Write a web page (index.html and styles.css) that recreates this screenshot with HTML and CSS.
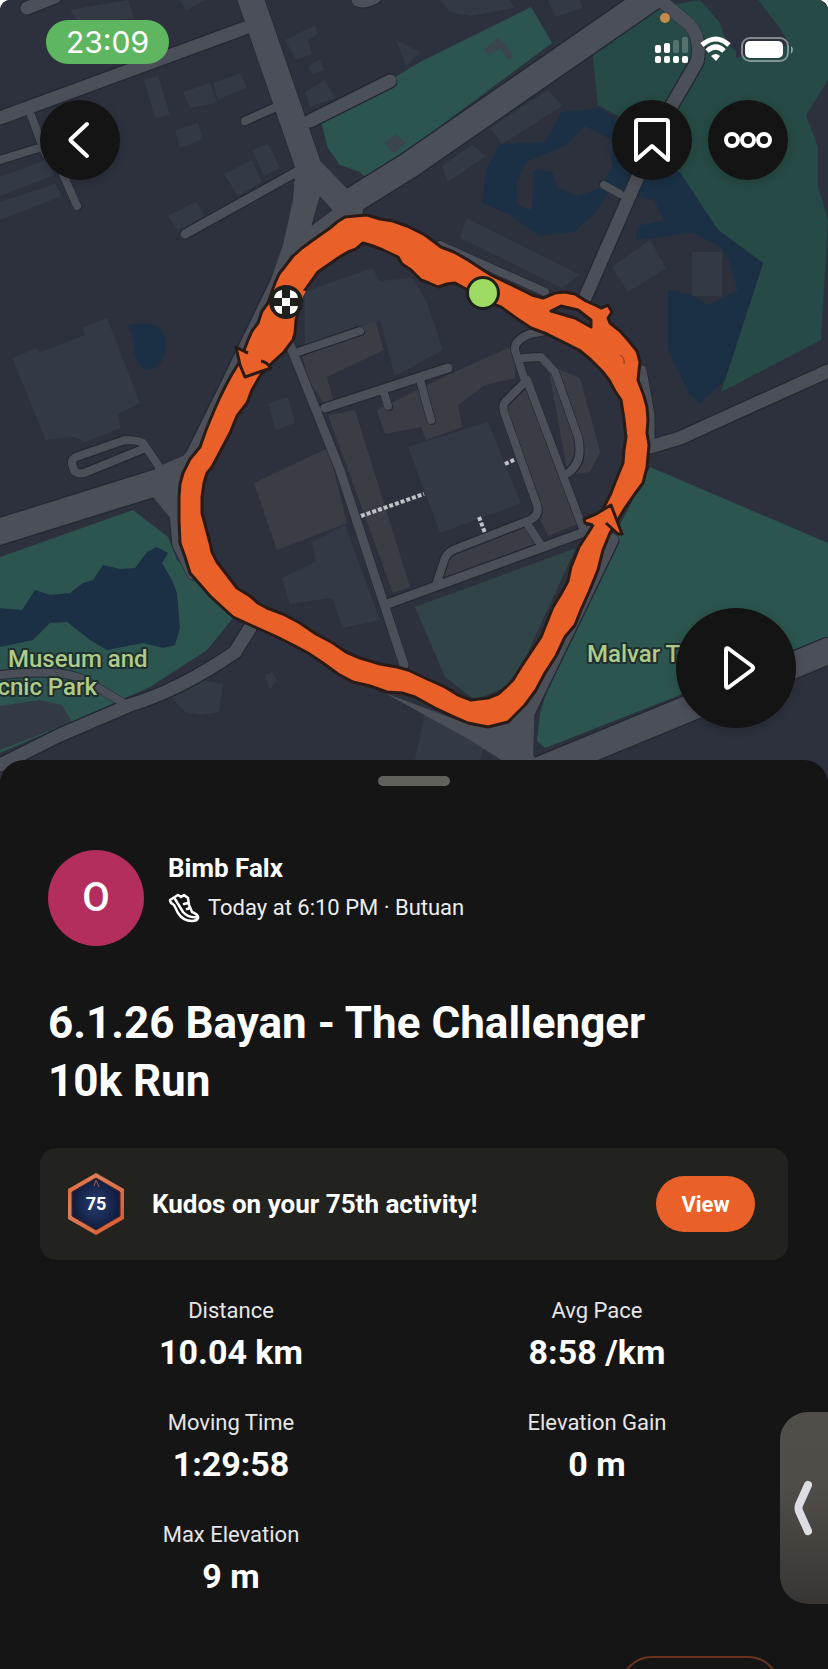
FILE: index.html
```html
<!DOCTYPE html>
<html lang="en">
<head>
<meta charset="utf-8">
<meta name="viewport" content="width=device-width, initial-scale=1">
<title>6.1.26 Bayan - The Challenger 10k Run</title>
<link rel="stylesheet" href="styles.css">
</head>
<body>
<div class="app">
  <section class="map" aria-label="Route map">
    <svg class="map-canvas" viewBox="0 0 828 780" preserveAspectRatio="xMidYMin slice" aria-hidden="true">
      <rect width="828" height="780" fill="#2c313d"/>
      <!-- parks -->
      <g fill="#2c5550">
        <path d="M321 122L420 62 531 7 552 43 408 150 368 180 360 172 340 165 328 148Z"/>
        <path d="M650 467L828 543V637L545 748 537 741 540 713 560 650 612 540Z"/>
        <path d="M0 557L133 510 168 537 177 560 233 618 207 650 150 687 72 722 0 753Z"/>
      </g>
      <g fill="#264a45">
        <path d="M655 8L592 50 598 105 680 150 675 173 718 230 763 263 721 392 821 340 828 220 818 187V147L806 115 828 80V0H758L781 30Q735 80 720 23L700 0Z"/>
      </g>
      <path d="M700 0Q738 18 736 58L790 45 781 30 758 0Z" fill="#2c313d"/>
      <path d="M415 607L576 548 521 667 506 687 475 700 445 677Z" fill="#314447"/>
      <!-- water -->
      <g fill="#1b3045">
        <path d="M0 608L22 610 35 590 50 595 70 593 83 583 93 580 103 565 120 569 135 568 147 552 157 547 168 553 162 563 172 580 177 593 180 628 175 645 163 648 143 643 107 650 90 640 67 622 50 623 33 640 0 647Z"/>
        <path d="M562 112L600 108 625 125 645 165 680 172 718 230 763 263 725 380 700 403 690 395 668 350 668 290 690 294 708 305 738 290 728 258 708 240 692 233 636 240 638 226 664 220 654 200 610 190 596 212 574 232 540 236 508 214 482 203 486 170 500 144 545 142Z"/>
        <path d="M128 325Q166 318 166 345 164 370 145 370 132 360 134 342Z"/>
      </g>
      <g fill="#2c313d">
        <path d="M565 146L585 126 612 140V168L600 188 578 196 558 188 552 172 534 170 532 210 518 206 516 184 526 162Z"/>
        <path d="M685 238Q720 236 728 262 732 290 705 302 684 288 675 268Z"/>
      </g>
      <!-- lots -->
      <g fill="#3a3e44">
        <path d="M254 483L328 448 347 523 277 550Z"/>
        <path d="M328 415L355 410 410 587 393 593Z"/>
        <path d="M302 355L375 320 384 350 310 385ZM308 380L326 375 334 402 325 405Z"/>
        <path d="M377 410L448 375 515 345 515 378 485 385 458 405 462 427 426 440 421 427 385 434Z"/>
        <path d="M505 410L530 383 580 523 548 536 537 513ZM548 365L580 378 600 452 590 472 568 475ZM450 552L530 525 541 543 437 580Z"/>
      </g>
      <!-- buildings -->
      <g fill="#333a45">
        <path d="M408 447L488 422 521 503 440 533Z"/>
        <path d="M305 292L372 268 380 281 412 278 426 300 443 350 395 376 380 320 305 345Z"/>
        <path d="M12 358L37 348 40 352 85 335 83 328 107 318 140 403 118 414 120 428 85 442 75 437 46 440Z"/>
        <path d="M282 578L316 562 312 542 345 525 380 620 343 628 332 598 290 604Z"/>
        <path d="M467 218L580 275 562 288 460 238ZM612 267L650 240 666 268 628 292ZM692 252H722V296H692Z"/>
        <path d="M183 92L210 83 217 103 190 108ZM213 83L240 73 247 87 218 100ZM144 80L158 76 170 115 155 118ZM175 130L198 123 203 139 180 148ZM224 174L252 160 262 182 238 196ZM252 150L268 144 280 168 264 176ZM168 216L196 202 204 216 178 232Z"/>
        <path d="M285 40L315 25 318 34 308 40 312 54 296 60ZM305 92L325 80 335 98 310 107ZM308 66L320 60 324 70 312 74ZM70 10L128 0 134 18 80 24ZM180 0H205L186 10Z"/>
        <path d="M490 128L548 90 562 106 502 144ZM442 166L472 145 486 156 448 182ZM548 0H580L582 8 556 17ZM440 0H510L514 8 470 16 450 12ZM396 40L420 52 406 66Z"/>
        <path d="M268 404L288 397 295 423 276 430ZM265 675L272 672 277 680 270 690ZM172 698L200 680 223 684 219 712 200 715 185 712Z"/>
        <path d="M0 177L45 160 55 175 0 196ZM0 202L55 184 62 196 0 220Z"/>
        <path d="M0 706L40 700 62 705 72 722 0 750ZM425 712L485 745 480 760H415Z"/>
      </g>
      <path d="M484 50L497 38 505 43 513 57 509 60 500 48 488 56ZM384 143L396 134 406 143 394 154Z" fill="#3a464c"/>
      <!-- roads: outline pass then surface pass -->
      <defs>
        <g id="roads" fill="none" stroke-linejoin="round">
          <g class="lane lane-8">
            <path d="M31 115L45 153M62 172L77 206M0 160L42 147M245 121L274 108M604 185L620 194M298 352L360 331M384 393L388 406M420 380L431 420M528 525L541 545"/>
            <path d="M160 468L143 443Q138 440 125 440L76 457Q70 460 73 467 74 475 84 473L143 449"/>
            <path d="M0 675Q60 668 85 680L125 704M545 292L440 245"/>
            <path d="M524 378L515 350Q514 340 530 334L545 331M524 358L541 357 555 372 578 437Q584 462 568 473M437 582L445 558Q448 551 458 548L530 520Q540 515 537 505L504 412Q502 404 507 400L527 380 582 526"/>
          </g>
          <g class="lane lane-9">
            <path d="M185 234L300 170M290 345L340 470 404 665M325 408L448 368M390 603L590 530M173 500Q175 525 177 545L192 575M642 370L650 415V447"/>
          </g>
          <g class="lane lane-12">
            <path d="M27 8L55 -3M310 121L390 81M358 0Q364 3 375 -3M650 447L680 438 828 371M660 0L690 25Q702 40 697 62L672 105 640 172 585 298M185 470L228 383 285 265M0 118L245 28M0 765L60 735 130 705Q180 690 235 652L250 628M520 730L612 540"/>
          </g>
          <g class="lane lane-26">
            <path d="M250 -3L309 168 350 210M300 245L350 202 408 166 655 -5M-5 533L165 480M515 780L828 651"/>
          </g>
        </g>
      </defs>
      <use href="#roads" class="road-edge"/>
      <use href="#roads" class="road-face"/>
      <path d="M296 165L323 168 340 200 298 238 275 290 260 310 283 245 293 200ZM155 468L183 456 197 440 185 500 172 520 168 515 153 497ZM385 693L470 725 535 700 533 755 545 772H520L470 740Z" fill="#4b4f58"/>
      <path d="M320 197L332 210 312 225Z" fill="#2c313d" stroke="#272c37"/>
      <g fill="none" stroke="#bfc2c5" stroke-width="4" stroke-dasharray="4 2"><path d="M361 516L424 494M505 464L516 459M479 517L485 533"/></g>
      <!-- recorded route -->
      <g fill="#ea6029" stroke="#2a1b17" stroke-width="3" stroke-linejoin="round">
        <path fill-rule="evenodd" d="M275 283L279 274 293 256 302 248 313 240 330 228 337 222 345 217 355 216 367 215 380 219 393 221 407 226 425 235 441 247 454 252 468 260 491 275 518 288 532 295 543 298 555 293 565 292 575 294 586 301 595 305 601 308 608 305 612 312 608 318 610 323 620 331 628 340 637 351 640 362 638 380 644 396 647 407 648 420 647 433 649 445 647 467 643 483 634 495 625 508 610 533 603 550 598 570 589 592 581 610 575 625 565 637 556 656 545 673 536 690 525 705 508 722 488 727 468 723 452 716 435 708 415 697 402 693 387 692 370 686 353 682 338 674 323 663 308 653 293 645 275 636 257 628 233 617 210 596 190 573 185 557 180 543 179 520 179 497 180 484 183 473 190 459 200 447 206 430 213 413 220 397 227 383 232 374 240 361 248 340 252 331 258 323 262 311 268 303ZM302 295L305 290 310 283 318 272 328 265 338 258 348 252 356 249 363 243 373 246 383 250 398 257 402 264 411 270 421 280 429 283 438 287 447 284 455 283 466 289 475 297 490 303 501 307 516 318 531 328 547 334 565 343 579 350 591 360 602 371 609 380 615 391 621 400 624 419 626 437 624 450 623 463 616 480 611 493 605 505 590 530 579 547 571 567 568 581 561 594 553 607 547 622 541 637 531 652 521 667 513 680 506 687 498 694 488 698 471 700 458 695 445 687 425 678 408 670 397 667 380 664 360 658 346 652 333 643 316 634 300 623 283 614 267 608 258 603 250 596 237 588 227 575 217 562 212 552 210 543 206 528 202 513 202 497 204 483 207 473 212 467 221 450 230 433 237 416 247 403 252 390 260 376 273 362 284 352 293 340 295 333 296 320 300 306ZM551 311L561 306 578 310 591 320V327L575 318Z"/>
        <path stroke="none" d="M272 304L279 280 300 290 306 291 298 306 280 336Z"/>
        <path d="M248 353Q241 350 236 347L240 365 245 377 271 368Q267 362 261 361"/>
        <path d="M593 525L585 523 584 519 596 514 611 505 622 534 618 534 606 523"/>
      </g>
      <path d="M620 355Q625 357 624 364" fill="none" stroke="#8b3d20"/>
      <circle cx="483" cy="293" r="17" fill="#1f1f1d"/><circle cx="483" cy="293" r="14" fill="#9ddb63"/>
      <circle cx="286" cy="302" r="17" fill="#1f1f1d"/>
      <path d="M282 298h8v8h-8zM282 290V298H274Q275 291 282 290ZM290 290V298H298Q297 291 290 290ZM282 314V306H274Q275 313 282 314ZM290 314V306H298Q297 313 290 314Z" fill="#fff"/>
      <g class="place">
        <text x="8" y="667">Museum and</text>
        <text x="97" y="695" text-anchor="end">cnic Park</text>
        <text x="587" y="662">Malvar T</text>
      </g>
    </svg>

    <div class="statusbar">
      <span class="clock">23:09</span>
      <span class="status-icons">
        <svg width="140" height="56" viewBox="0 0 140 56" aria-hidden="true">
          <circle cx="10" cy="10" r="5" fill="#c68a4b"/>
          <g fill="#fff"><rect y="37" width="6" height="8" rx="2"/><rect x="9" y="35" width="6" height="10" rx="2"/><rect y="48" width="6" height="7" rx="2"/><rect x="9" y="48" width="6" height="7" rx="2"/><rect x="18" y="48" width="6" height="7" rx="2"/><rect x="27" y="48" width="6" height="7" rx="2"/></g>
          <g fill="#fff" opacity=".22"><rect x="18" y="32" width="6" height="13" rx="2"/><rect x="27" y="29" width="6" height="16" rx="2"/></g>
          <path d="M47 37Q61 25 74 37M52 43Q61 35 69 43" fill="none" stroke="#fff" stroke-width="5"/>
          <path d="M56 48Q61 44 65 48L61 53Z" fill="#fff"/>
          <rect x="87" y="30" width="46" height="23" rx="8" fill="none" stroke="#fff" stroke-opacity=".42" stroke-width="2"/>
          <rect x="90" y="33" width="38" height="17" rx="5" fill="#fff"/>
          <path d="M136 38Q140 41 136 46Z" fill="#fff" fill-opacity=".5"/>
        </svg>
      </span>
    </div>

    <nav class="map-nav">
      <button class="round" aria-label="Back"><svg viewBox="0 0 80 80"><path d="M47 24L31 39Q30 40 31 41L47 56"/></svg></button>
      <button class="round save" aria-label="Save route"><svg viewBox="0 0 80 80"><path d="M24 22Q24 20 26 20H54Q56 20 56 22V60L40 46 24 60Z"/></svg></button>
      <button class="round" aria-label="More"><svg viewBox="0 0 80 80"><circle cx="24" cy="40" r="6"/><circle cx="40" cy="40" r="6"/><circle cx="56" cy="40" r="6"/></svg></button>
    </nav>
    <button class="round play" aria-label="Play route"><svg viewBox="0 0 120 120"><path d="M50 42Q50 39 53 41L76 58Q78 60 76 62L53 79Q50 81 50 78Z"/></svg></button>
  </section>

  <main class="sheet">
    <div class="handle"></div>
    <header class="athlete">
      <div class="avatar">O</div>
      <div class="athlete-text">
        <div class="name">Bimb Falx</div>
        <div class="meta">
          <svg width="32" height="32" viewBox="0 0 32 32" aria-hidden="true"><g fill="none" stroke="#fff" stroke-width="2.5" stroke-linejoin="round" stroke-linecap="round"><path d="M2 8L10 3 13 5 16 3 20 6 21 13 24 20Q31 23 30 26 29 29 24 29 15 29 10 21L6 13Q2 11 2 8ZM7 7L15 20Q20 26 29 25"/><path d="M16 12L20 11M19 17L22 16"/></g></svg>
          <span>Today at 6:10 PM · Butuan</span>
        </div>
      </div>
    </header>
    <h1 class="title">6.1.26 Bayan - The Challenger 10k Run</h1>
    <section class="kudos">
      <svg class="badge" width="58" height="64" viewBox="0 0 58 64" role="img" aria-label="75 activities">
        <defs><linearGradient id="rim" x1="0" y1="0" x2="1" y2="1"><stop offset="0" stop-color="#e85a28"/><stop offset=".3" stop-color="#d9805d"/><stop offset="1" stop-color="#d9572b"/></linearGradient>
        <radialGradient id="core"><stop offset="0" stop-color="#263d72"/><stop offset="1" stop-color="#111c3d"/></radialGradient></defs>
        <path d="M29 1L57 17V47L29 63 1 47V17Z" fill="url(#rim)"/>
        <path d="M29 6L53 20V44L29 58 5 44V20Z" fill="url(#core)" stroke="#4a2025"/>
        <path d="M27 14L29 8 32 15" fill="none" stroke="#a35a52"/>
        <text class="badge-num" x="29" y="38" text-anchor="middle">75</text>
      </svg>
      <p class="kudos-text">Kudos on your 75th activity!</p>
      <button class="view">View</button>
    </section>
    <dl class="stats">
      <div><dt>Distance</dt><dd>10.04 km</dd></div>
      <div><dt>Avg Pace</dt><dd>8:58 /km</dd></div>
      <div><dt>Moving Time</dt><dd>1:29:58</dd></div>
      <div><dt>Elevation Gain</dt><dd>0 m</dd></div>
      <div><dt>Max Elevation</dt><dd>9 m</dd></div>
    </dl>
    <button class="outlined" aria-label="More details"></button>
  </main>
  <button class="edge-tab" aria-label="Open side panel"><svg width="20" height="56" viewBox="0 0 20 56"><path d="M16 5L7 25Q6 28 7 31L16 51" fill="none" stroke="#dedee2" stroke-width="8" stroke-linecap="round" stroke-linejoin="round"/></svg></button>
</div>
</body>
</html>
```
FILE: styles.css
```css
* { box-sizing: border-box; }
body { margin: 0; background: #fff; font-family: Roboto, "Liberation Sans", Arial, sans-serif; color: #fff; }
button { border: 0; padding: 0; font: inherit; color: inherit; cursor: pointer; }
.app { position: relative; height: 100vh; overflow: hidden; border-radius: 10px 10px 0 0; background: #151515; }

.map { position: relative; aspect-ratio: 828 / 780; }
.map-canvas { position: absolute; inset: 0; width: 100%; height: 100%; }
.lane { stroke-linecap: round; }
.road-edge { stroke: #232833; }
.road-face { stroke: #4b4f58; }
.lane-8 { stroke-width: 8px; }
.lane-9 { stroke-width: 9px; }
.lane-12 { stroke-width: 13px; }
.lane-26 { stroke-width: 26px; }
.road-edge { filter: drop-shadow(1px 1px 0 #232833) drop-shadow(-1px -1px 0 #232833); }
.place { font: 500 24px Roboto, sans-serif; fill: #aecb8a; stroke: #1f2f2d; stroke-width: 4px; paint-order: stroke; stroke-linejoin: round; }

.statusbar { position: relative; display: flex; justify-content: space-between; padding: 8px 33px 0 46px; }
.clock { height: 44px; margin-top: 12px; padding: 0 20px; border-radius: 22px; background: #5eb760; font: 400 30px/44px Inter, sans-serif; }
.status-icons { height: 56px; }
.status-icons svg { display: block; }
.map-nav { position: relative; display: flex; gap: 16px; margin-top: 36px; padding: 0 40px; }
.round { width: 80px; height: 80px; border-radius: 50%; background: #141414; box-shadow: 0 2px 10px rgba(0, 0, 0, .2); }
.round svg { display: block; width: 100%; height: 100%; fill: none; stroke: #fff; stroke-width: 4px; stroke-linejoin: round; stroke-linecap: round; }
.save { margin-left: auto; }
.play { position: absolute; right: 32px; bottom: 52px; width: 120px; height: 120px; }

.sheet { position: relative; margin-top: -20px; padding: 16px 40px 0; border-radius: 24px 24px 0 0; background: #151515; }
.handle { width: 72px; height: 10px; margin: 0 auto; border-radius: 5px; background: #61615c; }
.athlete { display: flex; gap: 24px; margin-top: 64px; padding: 0 8px; }
.avatar { width: 96px; height: 96px; border-radius: 50%; background: #b32d5d; font-size: 40px; font-weight: 500; line-height: 96px; text-align: center; }
.athlete-text { padding-top: 2px; }
.name { font-size: 26px; font-weight: 700; line-height: 32px; }
.meta { display: flex; align-items: center; gap: 8px; margin-top: 8px; font-size: 22px; line-height: 32px; color: #ededed; }
.title { max-width: 640px; margin: 48px 0 0; padding: 0 8px; font-size: 44px; line-height: 58px; font-weight: 700; }
.kudos { display: flex; align-items: center; height: 112px; margin-top: 38px; padding: 0 33px 0 27px; border-radius: 16px; background: #22221f; }
.badge-num { font: 700 18px Roboto, sans-serif; fill: #fff; }
.kudos-text { margin: 0 auto 0 27px; font-size: 26px; font-weight: 700; }
.view { width: 99px; height: 56px; border-radius: 28px; background: #ea6029; font-size: 22px; font-weight: 700; }
.stats { display: grid; grid-template-columns: 1fr 1fr; row-gap: 34px; margin: 36px 0 0; padding: 0 8px; text-align: center; }
.stats dt { font-size: 22px; line-height: 30px; color: #e6e6e6; }
.stats dd { margin: 4px 0 0; font-size: 34px; font-weight: 700; line-height: 44px; }
.outlined { display: block; width: 160px; height: 64px; margin: 58px 8px 0 auto; border: 2px solid #6b321f; border-radius: 32px; background: transparent; }
.edge-tab { position: absolute; right: 0; bottom: 65px; width: 48px; height: 192px; padding-left: 8px; border-radius: 28px 0 0 28px; background: linear-gradient(#514e4a, #504d49 40%, #393532); }
.edge-tab svg { display: block; margin-left: 4px; }
```
